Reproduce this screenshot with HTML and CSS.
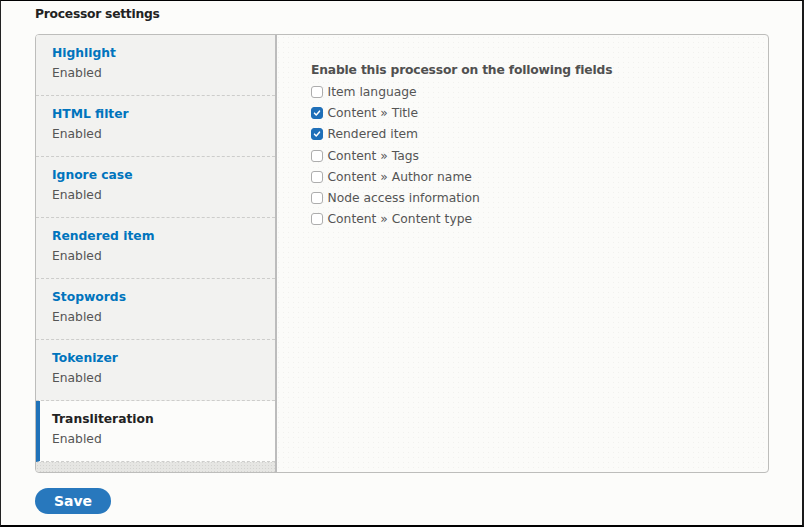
FILE: index.html
```html
<!DOCTYPE html>
<html>
<head>
<meta charset="utf-8">
<link rel="stylesheet" href="styles.css">
</head>
<body>
<div class="frame">
  <h2 class="heading">Processor settings</h2>
  <div class="vt">
    <ul class="vt-menu">
      <li class="vt-item"><a class="vt-title">Highlight</a><span class="vt-summary">Enabled</span></li>
      <li class="vt-item"><a class="vt-title">HTML filter</a><span class="vt-summary">Enabled</span></li>
      <li class="vt-item"><a class="vt-title">Ignore case</a><span class="vt-summary">Enabled</span></li>
      <li class="vt-item"><a class="vt-title">Rendered item</a><span class="vt-summary">Enabled</span></li>
      <li class="vt-item"><a class="vt-title">Stopwords</a><span class="vt-summary">Enabled</span></li>
      <li class="vt-item"><a class="vt-title">Tokenizer</a><span class="vt-summary">Enabled</span></li>
      <li class="vt-item is-selected"><a class="vt-title">Transliteration</a><span class="vt-summary">Enabled</span></li>
    </ul>
    <div class="vt-pane">
      <div class="field-title">Enable this processor on the following fields</div>
      <ul class="checks">
        <li class="check"><span class="cb"></span>Item language</li>
        <li class="check"><span class="cb is-checked"><svg viewBox="0 0 12 12" width="12" height="12"><path d="M3 6.2 L5.1 8.3 L9 3.8" fill="none" stroke="#fff" stroke-width="1.8" stroke-linecap="round" stroke-linejoin="round"/></svg></span>Content » Title</li>
        <li class="check"><span class="cb is-checked"><svg viewBox="0 0 12 12" width="12" height="12"><path d="M3 6.2 L5.1 8.3 L9 3.8" fill="none" stroke="#fff" stroke-width="1.8" stroke-linecap="round" stroke-linejoin="round"/></svg></span>Rendered item</li>
        <li class="check"><span class="cb"></span>Content » Tags</li>
        <li class="check"><span class="cb"></span>Content » Author name</li>
        <li class="check"><span class="cb"></span>Node access information</li>
        <li class="check"><span class="cb"></span>Content » Content type</li>
      </ul>
    </div>
  </div>
  <button class="save">Save</button>
</div>
</body>
</html>
```
FILE: styles.css
```css
html, body {
  margin: 0;
  padding: 0;
  background: #fcfcfa;
}
.frame {
  box-sizing: border-box;
  width: 804px;
  height: 527px;
  border-top: 1px solid #000;
  border-left: 1px solid #222;
  border-right: 2px solid #1a1a1a;
  border-bottom: 2px solid #000;
  padding: 4px 0 0 34px;
  font-family: "DejaVu Sans", sans-serif;
  font-size: 12.3px;
  color: #555;
  overflow: hidden;
}
.heading {
  margin: 0 0 11px 0;
  font-size: 12.3px;
  line-height: 18px;
  font-weight: 600;
  letter-spacing: -0.25px;
  color: #222;
}
.vt {
  display: flex;
  box-sizing: border-box;
  width: 734px;
  height: 439px;
  border: 1px solid #bdbdbb;
  border-radius: 4px;
  overflow: hidden;
  background-color: #fbfbf9;
  background-image: radial-gradient(circle, #f1f1ee 0.6px, transparent 0.9px);
  background-size: 5px 5px;
}
.vt-menu {
  list-style: none;
  margin: 0;
  padding: 0;
  box-sizing: border-box;
  width: 241px;
  flex: none;
  border-right: 2px solid #bcbcbc;
  background-color: #e6e6e3;
  background-image: radial-gradient(circle, #d4d4d1 0.6px, transparent 0.9px);
  background-size: 3px 3px;
}
.vt-item {
  box-sizing: border-box;
  height: 61px;
  padding: 8px 0 0 16px;
  background: #f2f2f0;
  border-bottom: 1px dashed #cdcdcb;
  line-height: 20px;
}
.vt-title {
  display: block;
  font-weight: bold;
  color: #0074bd;
}
.vt-summary {
  display: block;
  color: #555;
}
.vt-item.is-selected {
  background: #fcfcfa;
  border-left: 4px solid #1f72b8;
  padding-left: 12px;
}
.vt-item.is-selected .vt-title {
  color: #222;
}
.vt-pane {
  flex: 1;
  padding: 25px 0 0 34px;
}
.field-title {
  font-weight: bold;
  line-height: 20px;
  letter-spacing: -0.17px;
  color: #505050;
  margin-bottom: 1.5px;
}
.checks {
  list-style: none;
  margin: 0;
  padding: 0;
}
.check {
  display: flex;
  align-items: center;
  height: 21.2px;
  color: #555;
}
.cb {
  box-sizing: border-box;
  width: 12px;
  height: 12px;
  margin-right: 4.5px;
  border: 1px solid #adadad;
  border-radius: 3px;
  background: #fff;
  display: flex;
  align-items: center;
  justify-content: center;
  flex: none;
}
.cb.is-checked {
  background: #1f6fb8;
  border-color: #1f6fb8;
}
.cb svg {
  display: block;
}
.save {
  display: block;
  margin-top: 15px;
  width: 76px;
  height: 26px;
  border: 0;
  border-radius: 13px;
  background: #2878bd;
  color: #fff;
  font-family: "DejaVu Sans", sans-serif;
  font-size: 14px;
  font-weight: 600;
  padding: 0;
  line-height: 26px;
}
```
